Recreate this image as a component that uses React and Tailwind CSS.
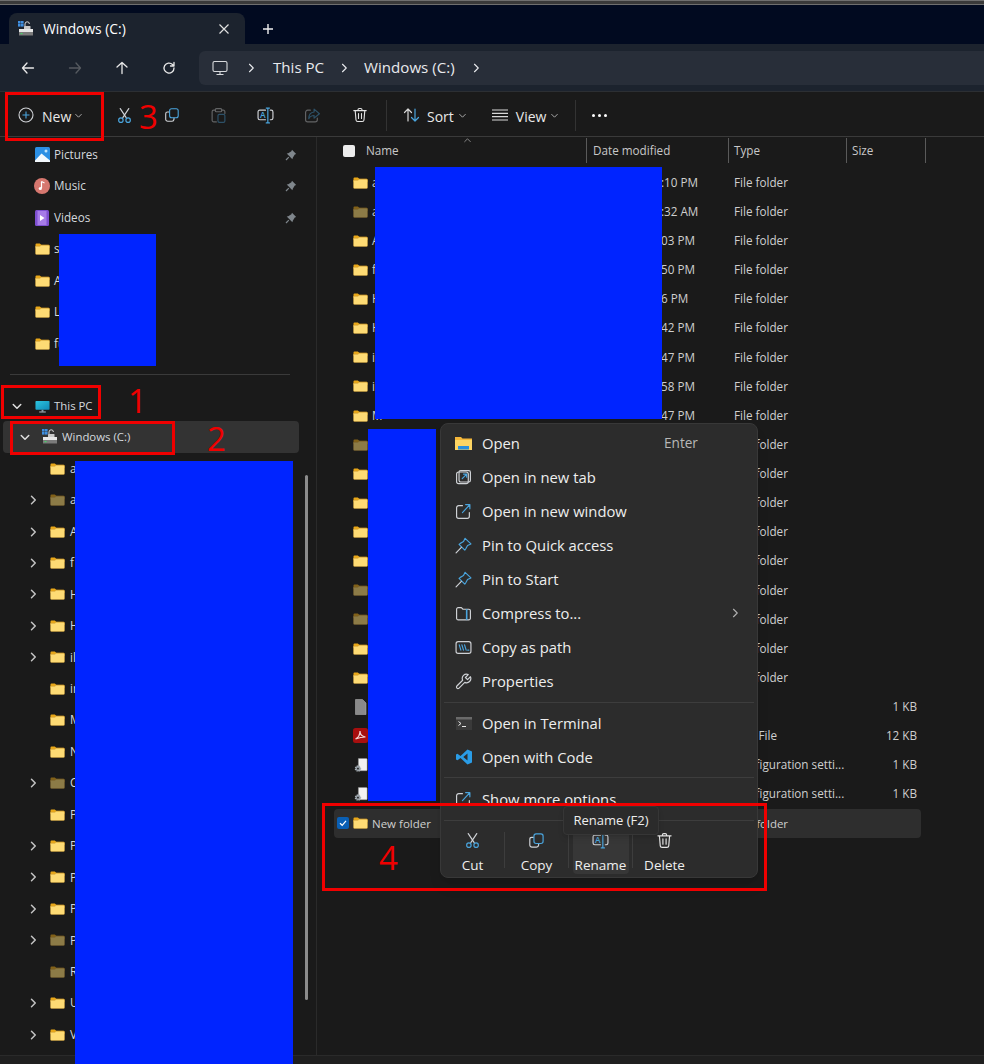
import React from 'react';

const GRAY = '#cfd2d6';
const BLUE = '#4aa5de';

// two-tone glyphs in the Windows 11 style
function Ico({ size = 18, children, className = '' }) {
  return (
    <svg width={size} height={size} viewBox="0 0 16 16" fill="none" strokeWidth="1.1" strokeLinecap="round" strokeLinejoin="round" className={`shrink-0 ${className}`}>
      {children}
    </svg>
  );
}

const Scissors = ({ size }) => (
  <Ico size={size}>
    <path d="M4 1.5 9.6 10M12 1.5 6.4 10" stroke={GRAY} />
    <circle cx="4.6" cy="12.4" r="2.1" stroke={BLUE} />
    <circle cx="11.4" cy="12.4" r="2.1" stroke={BLUE} />
  </Ico>
);
const CopyIco = ({ size }) => (
  <Ico size={size}>
    <path d="M5 5H3.5A1.8 1.8 0 0 0 1.7 6.8v5.4A2 2 0 0 0 3.7 14.2H8A2 2 0 0 0 10 12.4V11" stroke={GRAY} />
    <rect x="5.6" y="1.8" width="8.6" height="9" rx="2" stroke={BLUE} />
  </Ico>
);
const PasteIco = ({ size }) => (
  <Ico size={size}>
    <path d="M5 3H3.5A1.5 1.5 0 0 0 2 4.5v8A1.5 1.5 0 0 0 3.5 14H6M11 3h1.5A1.5 1.5 0 0 1 14 4.5V6" stroke={GRAY} />
    <rect x="5" y="1.5" width="6" height="3" rx="1" stroke={GRAY} />
    <rect x="7.5" y="7" width="6.5" height="7.5" rx="1.3" stroke={BLUE} />
  </Ico>
);
const RenameIco = ({ size }) => (
  <Ico size={size}>
    <path d="M8 3H2.6A1.6 1.6 0 0 0 1 4.6v5.8A1.6 1.6 0 0 0 2.6 12H8M12.5 3h.9A1.6 1.6 0 0 1 15 4.6v5.800a1.6 1.6 0 0 1-1.6 1.600h-.9" stroke={GRAY} />
    <path d="M10.2 1v14M8.700 1h3M8.700 15h3" stroke={BLUE} />
    <text x="2.800" y="10.300" fontSize="8" fontWeight="600" fontFamily="Open Sans, sans-serif" fill={BLUE} stroke="none">A</text>
  </Ico>
);
const ShareIco = ({ size }) => (
  <Ico size={size}>
    <path d="M6 3H3.5A2 2 0 0 0 1.5 5v7A2 2 0 0 0 3.5 14h7a2 2 0 0 0 2-2v-1.5" stroke={GRAY} />
    <path d="M9.5 2 14.5 6.3 9.5 10.5V8C7 8 5.5 9 4.5 11 4.5 7.5 6.5 5 9.5 4.7Z" stroke={BLUE} />
  </Ico>
);
const TrashIco = ({ size }) => (
  <Ico size={size}>
    <path d="M1.8 3.6h12.4M6 3.6V2.800A1.3 1.3 0 0 1 7.300 1.500h1.400A1.300 1.300 0 0 1 10 2.800v.8M3.200 3.600l.8 9.400a1.700 1.700 0 0 0 1.700 1.500h4.600A1.700 1.700 0 0 0 12 13l.8-9.400M6.500 6.500v5M9.500 6.500v5" stroke="#e4e4e4" />
  </Ico>
);
const Chevron = ({ dir = 'down', size = 12, color = '#d0d0d0', w = 1.5 }) => {
  const d = { down: 'M3 6l5 5 5-5', up: 'M3 10l5-5 5 5', right: 'M6 3l5 5-5 5' }[dir];
  return (
    <svg width={size} height={size} viewBox="0 0 16 16" fill="none" stroke={color} strokeWidth={w} strokeLinecap="round" strokeLinejoin="round" className="shrink-0">
      <path d={d} />
    </svg>
  );
};

function Folder({ dim = false, w = 15 }) {
  return (
    <svg width={w} height={w * 0.8} viewBox="0 0 15 12" className={`shrink-0 ${dim ? 'opacity-50' : ''}`}>
      <path d="M.5 1.5A1 1 0 0 1 1.5.5h3.300l1.500 1.300h7.200a1 1 0 0 1 1 1V5H.5Z" fill="#e9a718" />
      <path d="M.5 3.300h4.300l1.400-1h7.300a1 1 0 0 1 1 1v7.200a1 1 0 0 1-1 1h-12a1 1 0 0 1-1-1Z" fill="#fedb74" stroke="#c79a3a" strokeWidth=".5" />
    </svg>
  );
}

function DriveIco({ w = 16 }) {
  return (
    <svg width={w} height={w} viewBox="0 0 16 16" className="shrink-0">
      <rect x="0" y="0" width="2.6" height="2.6" fill="#3f8fe0" />
      <rect x="3" y="0" width="2.6" height="2.6" fill="#3f8fe0" />
      <rect x="0" y="3" width="2.6" height="2.6" fill="#3f8fe0" />
      <rect x="3" y="3" width="2.6" height="2.6" fill="#3f8fe0" />
      <path d="M7 5.500V3a2.200 2.200 0 0 1 4.400 0" fill="none" stroke="#d8d8d8" strokeWidth="1" />
      <rect x="6" y="5" width="6.5" height="4" rx=".6" fill="#c9c9c9" />
      <path d="M1 8h14v3H1Z" fill="#e6e6e6" />
      <rect x="1" y="11" width="14" height="3.5" fill="#7b7b7b" />
      <rect x="2.500" y="12" width="2" height="1.2" fill="#47d16a" />
    </svg>
  );
}

function PcIco({ size = 16 }) {
  return (
    <svg width={size} height={size} viewBox="0 0 16 16" className="shrink-0">
      <defs>
        <linearGradient id="pcg" x1="0" y1="0" x2="1" y2="1">
          <stop offset="0" stopColor="#2dc6e0" />
          <stop offset="1" stopColor="#0f8ab8" />
        </linearGradient>
      </defs>
      <rect x="0.5" y="2" width="15" height="9.5" rx=".8" fill="url(#pcg)" />
      <rect x="7" y="11.5" width="2" height="2" fill="#8c9aa6" />
      <rect x="4.5" y="13.3" width="7" height="1.1" fill="#aeb6bd" />
    </svg>
  );
}

function QuickIco({ kind }) {
  if (kind === 'pictures') {
    return (
      <svg width="15" height="15" viewBox="0 0 15 15" className="shrink-0">
        <rect width="15" height="15" rx="1.5" fill="#2b8fe4" />
        <circle cx="11" cy="4" r="1.5" fill="#bfe3fb" />
        <path d="M0 13.500 6.500 6.500 15 13.500V15H0Z" fill="#f2f8fd" />
      </svg>
    );
  }
  if (kind === 'music') {
    return (
      <svg width="16" height="16" viewBox="0 0 16 16" className="shrink-0">
        <circle cx="8" cy="8" r="8" fill="#d6776f" />
        <path d="M7.500 3.500v6.500" stroke="#fff" strokeWidth="1.2" />
        <path d="M7.500 3.500 10.500 5" stroke="#fff" strokeWidth="1.2" />
        <circle cx="6.3" cy="10.5" r="1.6" fill="#fff" />
      </svg>
    );
  }
  return (
    <svg width="14" height="16" viewBox="0 0 14 16" className="shrink-0">
      <rect width="14" height="16" rx="1.5" fill="#7e4fd0" />
      <rect x="2.5" y="1" width="9" height="14" fill="#a77ce8" />
      <path d="M5 5v6l4.500-3Z" fill="#fff" />
    </svg>
  );
}

const Pin = () => (
  <svg width="12" height="12" viewBox="0 0 12 12" className="shrink-0">
    <path d="M7 .8 11.200 5 9.800 5.600 7.800 8.800 7.400 10.300 1.700 4.600 3.200 4.200 6.400 2.200Z" fill="#7f868c" />
    <path d="M3.800 8.200 1 11" stroke="#7f868c" strokeWidth="1.2" />
  </svg>
);

const sideRows = [
  { icon: 'pictures', label: 'Pictures', pin: true },
  { icon: 'music', label: 'Music', pin: true },
  { icon: 'videos', label: 'Videos', pin: true },
  { label: 's' },
  { label: 'A' },
  { label: 'L' },
  { label: 'fu' },
];

const treeRows = [
  { label: 'a' },
  { label: 'a', chev: true, dim: true },
  { label: 'A', chev: true },
  { label: 'f', chev: true },
  { label: 'H', chev: true },
  { label: 'H', chev: true },
  { label: 'il', chev: true },
  { label: 'in' },
  { label: 'M' },
  { label: 'N' },
  { label: 'C', chev: true, dim: true },
  { label: 'P' },
  { label: 'P', chev: true },
  { label: 'P', chev: true },
  { label: 'P', chev: true },
  { label: 'P', chev: true, dim: true },
  { label: 'R', dim: true },
  { label: 'U', chev: true },
  { label: 'V', chev: true },
];

const files = [
  { name: 'a', date: ':10 PM' },
  { name: 'a', date: ':32 AM', dim: true },
  { name: 'A', date: '03 PM' },
  { name: 'f', date: '50 PM' },
  { name: 'H', date: '6 PM' },
  { name: 'H', date: '42 PM' },
  { name: 'i', date: '47 PM' },
  { name: 'i', date: '58 PM' },
  { name: 'M', date: '47 PM' },
  { name: 'N', dim: true, tail: 'r' },
  { name: 'C' },
  { name: 'P', tail: 'es' },
  { name: 'P', tail: 'es' },
  { name: 'P', tail: 'es' },
  { name: 'P', dim: true, tail: 'a' },
  { name: 'R', dim: true },
  { name: 'U' },
  { name: 'V' },
  { name: 'b', kind: 'file', type: '', size: '1 KB', tail: '2' },
  { name: 'b', kind: 'pdf', type: 'PDF File', size: '12 KB' },
  { name: 'c', kind: 'cfg', type: 'Configuration setti...', size: '1 KB', tail: 'r' },
  { name: 'c', kind: 'cfg', type: 'Configuration setti...', size: '1 KB', tail: 'r' },
];

function FileIcon({ kind, dim }) {
  if (kind === 'file') {
    return (
      <svg width="15" height="16" viewBox="0 0 15 16" className="shrink-0">
        <path d="M2.500 .5h7l3.500 3.500v11.500h-10.500Z" fill="#8a8a8a" stroke="#a9a9a9" strokeWidth=".6" />
      </svg>
    );
  }
  if (kind === 'pdf') {
    return (
      <svg width="15" height="15" viewBox="0 0 15 15" className="shrink-0">
        <rect width="15" height="15" rx="2.5" fill="#a80f0f" />
        <path d="M2.500 11C5.500 9.500 7 6 7 3c0 3 2 5.500 5.500 6-3 0-6 .5-10 2Z" fill="none" stroke="#f3d6d6" strokeWidth="1.2" />
      </svg>
    );
  }
  if (kind === 'cfg') {
    return (
      <svg width="14" height="15" viewBox="0 0 16 17" className="shrink-0">
        <path d="M5 .5h9a1 1 0 0 1 1 1v12a1 1 0 0 1-1 1H5Z" fill="#f2f2f2" stroke="#8f8f8f" strokeWidth=".5" />
        <circle cx="4.500" cy="12" r="2.800" fill="#8f989f" stroke="#a9b1b7" strokeWidth="1.800" strokeDasharray="1.300 1" />
        <circle cx="4.500" cy="12" r="1" fill="#1a1a1a" />
      </svg>
    );
  }
  return <Folder dim={dim} />;
}

function FileRow({ f }) {
  return (
    <div className="h-[29.14px] flex items-center text-[11.7px] text-[#cfcfcf]">
      <div className="w-[269px] flex items-center pl-[36px] gap-[4px]">
        <span className="w-[15px] flex justify-center shrink-0"><FileIcon kind={f.kind} dim={f.dim} /></span>
        <span className="w-[64px]">{f.name}</span>
        <span>{f.tail}</span>
      </div>
      <div className="w-[142px] pl-[75px] whitespace-nowrap">{f.date}</div>
      <div className="w-[118px] pl-[6px] whitespace-nowrap">{f.type ?? 'File folder'}</div>
      <div className="w-[71px] text-right whitespace-nowrap">{f.size}</div>
    </div>
  );
}

function ColHead({ w, pl, children }) {
  return (
    <div className={`${w} ${pl} mt-px h-[25px] flex items-center border-r border-[#5a5a5a] text-[11.7px] text-[#c8c8c8]`}>{children}</div>
  );
}

function MenuItem({ icon, label, shortcut, arrow }) {
  return (
    <div className="h-[34px] flex items-center pl-[14px] text-[14.8px] text-[#eeeeee]">
      <span className="w-[17px] flex justify-center shrink-0">{icon}</span>
      <span className="ml-[10px] w-[182px] whitespace-nowrap">{label}</span>
      {shortcut && <span className="text-[13.6px] text-[#b8b8b8] whitespace-nowrap">{shortcut}</span>}
      {arrow && <span className="ml-[65px]"><Chevron dir="right" size={12} color="#b0b0b0" /></span>}
    </div>
  );
}

function BarBtn({ label, icon, hover }) {
  return (
    <div className="w-[63px] flex justify-center shrink-0">
      <div className={`w-[56px] h-[47px] flex flex-col items-center pt-[5px] gap-[8px] rounded ${hover ? 'bg-[#373737]' : ''}`}>
        {icon}
        <span className="text-[13.5px] leading-[16px] text-[#eeeeee]">{label}</span>
      </div>
    </div>
  );
}

const NavArrow = ({ d, color = '#e8e8e8' }) => (
  <span className="w-[47px] flex justify-center">
    <svg width="16" height="16" viewBox="0 0 16 16" fill="none" stroke={color} strokeWidth="1.3" strokeLinecap="round" strokeLinejoin="round">
      <path d={d} />
    </svg>
  </span>
);

export default function App() {
  return (
    <div className="relative w-[984px] h-[1064px] overflow-hidden bg-[#1a1a1a] font-['Open_Sans',sans-serif]">
      {/* window edge */}
      <div className="h-[5px] bg-[#3a3a3a] border-y border-[#6f6f6f]" />

      {/* TAB STRIP */}
      <div className="h-[39px] bg-[#010a20] flex items-end pl-[9px]">
        <div className="w-[236px] h-[31px] bg-[#1c232e] rounded-t-lg flex items-center pl-[9px]">
          <DriveIco w={16} />
          <span className="ml-[9px] mt-[2px] text-[13.8px] text-white font-medium">Windows (C:)</span>
          <span className="ml-auto mr-[15px]">
            <svg width="12" height="12" viewBox="0 0 12 12" stroke="#e0e0e0" strokeWidth="1.2"><path d="M1.500 1.500l9 9M10.500 1.500l-9 9" /></svg>
          </span>
        </div>
        <div className="h-[31px] flex items-center ml-[17px]">
          <svg width="12" height="12" viewBox="0 0 12 12" stroke="#f0f0f0" strokeWidth="1.4"><path d="M6 1v10M1 6h10" /></svg>
        </div>
      </div>

      {/* NAV ROW */}
      <div className="h-[48px] bg-[#1c232e] flex items-center pl-[4px] border-b border-[#2c2f33]">
        <NavArrow d="M13.500 8h-11M7 3 2.500 8 7 13" />
        <NavArrow d="M2.500 8h11M9 3l4.500 5L9 13" color="#565a60" />
        <NavArrow d="M8 13.500v-11M3 7l5-4.500L13 7" />
        <NavArrow d="M13 8a5 5 0 1 1-1.500-3.500L13 6M13 2.500V6H9.500" />
        <div className="ml-[7px] flex-1 h-[34px] bg-[#282e39] rounded-l-md flex items-center pl-[13px] text-[15.1px] text-[#e8eaed]">
          <svg width="16" height="16" viewBox="0 0 16 16" fill="none" stroke="#d8dadd" strokeWidth="1.1">
            <rect x="1" y="1.5" width="14" height="10" rx="1.5" />
            <path d="M8 11.500v3M4.500 14.500h7" />
          </svg>
          <span className="ml-[17px]"><Chevron dir="right" size={12} color="#e8eaed" /></span>
          <span className="ml-[16px]">This PC</span>
          <span className="ml-[14px]"><Chevron dir="right" size={12} color="#e8eaed" /></span>
          <span className="ml-[14px]">Windows (C:)</span>
          <span className="ml-[15px]"><Chevron dir="right" size={12} color="#e8eaed" /></span>
        </div>
      </div>

      {/* TOOLBAR */}
      <div className="h-[45px] pt-[2px] bg-[#1a1a1a] border-b border-[#3a3a3a] flex items-center text-[#e8e8e8]">
        <div className="w-[101px] flex items-center pl-[18px]">
          <svg width="16" height="16" viewBox="0 0 16 16" fill="none" strokeWidth="1.1">
            <circle cx="8" cy="8" r="7" stroke="#cfd2d6" />
            <path d="M8 4.500v7M4.500 8h7" stroke={BLUE} />
          </svg>
          <span className="ml-[8px] mt-[3px] text-[14px]">New</span>
          <span className="ml-[3px]"><Chevron size={9} color="#c0c0c0" /></span>
        </div>
        <span className="w-[47px] flex justify-center"><Scissors size={17} /></span>
        <span className="w-[47px] flex justify-center"><CopyIco size={16} /></span>
        <span className="w-[47px] flex justify-center opacity-40"><PasteIco size={17} /></span>
        <span className="w-[47px] flex justify-center"><RenameIco size={17} /></span>
        <span className="w-[47px] flex justify-center opacity-40"><ShareIco size={17} /></span>
        <span className="w-[47px] flex justify-center"><TrashIco size={16} /></span>
        <span className="ml-[3px] w-px h-[31px] bg-[#333333]" />
        <span className="ml-[16px]">
          <svg width="17" height="16" viewBox="0 0 17 16" fill="none" strokeWidth="1.2" strokeLinecap="round" strokeLinejoin="round">
            <path d="M5 14V2M1.500 5.500 5 2l3.500 3.500" stroke="#d8d8d8" />
            <path d="M12 2v12M8.500 10.500 12 14l3.500-3.500" stroke={BLUE} />
          </svg>
        </span>
        <span className="ml-[7px] mt-[3px] text-[14px]">Sort</span>
        <span className="ml-[4px]"><Chevron size={9} color="#c0c0c0" /></span>
        <span className="ml-[25px]">
          <svg width="16" height="12" viewBox="0 0 16 12" stroke="#d8d8d8" strokeWidth="1.2"><path d="M0 1h16M0 4.300h16M0 7.600h16M0 11h16" /></svg>
        </span>
        <span className="ml-[8px] mt-[3px] text-[14px]">View</span>
        <span className="ml-[4px]"><Chevron size={9} color="#c0c0c0" /></span>
        <span className="ml-[16px] w-px h-[31px] bg-[#333333]" />
        <span className="ml-[16px] flex gap-[3px]">
          <i className="w-[3px] h-[3px] rounded-full bg-white" />
          <i className="w-[3px] h-[3px] rounded-full bg-white" />
          <i className="w-[3px] h-[3px] rounded-full bg-white" />
        </span>
      </div>

      <div className="flex h-[918px]">
        {/* SIDEBAR */}
        <aside className="relative w-[317px] pt-[2px] border-r border-[#2a2a2a] shrink-0 overflow-hidden">
          {sideRows.map((r, i) => (
            <div key={i} className="h-[31.5px] flex items-center pl-[34px] gap-[4px] text-[11.7px] text-[#d4d9de]">
              <span className="w-[16px] flex justify-center shrink-0">{r.icon ? <QuickIco kind={r.icon} /> : <Folder />}</span>
              <span>{r.label}</span>
              {r.pin && <span className="absolute left-[285px]"><Pin /></span>}
            </div>
          ))}
          <div className="h-[31.5px] flex items-center pl-[10px] pr-[26px] pb-[1px]">
            <div className="w-full h-px bg-[#3a3a3a]" />
          </div>
          <div className="h-[30px] flex items-center pl-[11px] text-[11.4px] text-[#d4d9de]">
            <Chevron size={12} color="#e0e0e0" w={2} />
            <span className="ml-[12px]"><PcIco size={15} /></span>
            <span className="ml-[4px]">This PC</span>
          </div>
          <div className="h-[32px] ml-[3px] w-[296px] bg-[#333333] rounded flex items-center pl-[16px] text-[11.4px] text-[#d4d9de]">
            <Chevron size={12} color="#e0e0e0" w={2} />
            <span className="ml-[11px]"><DriveIco w={16} /></span>
            <span className="ml-[4px]">Windows (C:)</span>
          </div>
          {treeRows.map((r, i) => (
            <div key={i} className="h-[31.45px] flex items-center pl-[27px] text-[11.7px] text-[#d4d9de]">
              <span className="w-[12px] shrink-0">{r.chev && <Chevron dir="right" size={12} color="#c4c4c4" w={2} />}</span>
              <span className="ml-[11px]"><Folder dim={r.dim} /></span>
              <span className="ml-[5px]">{r.label}</span>
            </div>
          ))}
          {/* sidebar scrollbar */}
          <div className="absolute left-[305px] top-[338px] w-[3px] h-[525px] rounded-full bg-[#8c8c8c]" />
        </aside>

        {/* FILE LIST */}
        <main className="flex-1 min-w-0">
          <div className="h-[31px] flex items-start">
            <div className="w-[270px] mt-px h-[25px] pl-[26px] flex items-center border-r border-[#5a5a5a] text-[11.7px] text-[#c8c8c8]">
              <span className="w-[12px] h-[12px] rounded-[2px] bg-[#ececec]" />
              <span className="ml-[11px]">Name</span>
              <span className="ml-[64px] -mt-[20px]"><Chevron dir="up" size={9} color="#9a9a9a" /></span>
            </div>
            <ColHead w="w-[142px]" pl="pl-[6px]">Date modified</ColHead>
            <ColHead w="w-[118px]" pl="pl-[5px]">Type</ColHead>
            <ColHead w="w-[79px]" pl="pl-[5px]">Size</ColHead>
          </div>
          {files.map((f, i) => <FileRow key={i} f={f} />)}
          <div className="h-[29px] ml-[17px] w-[587px] bg-[#2e2e2e] rounded flex items-center pl-[3px] text-[11.5px] text-[#cfcfcf]">
            <span className="w-[12px] h-[12px] rounded-[2px] bg-[#0a5fb4] flex items-center justify-center">
              <svg width="8" height="8" viewBox="0 0 8 8" fill="none" stroke="#fff" strokeWidth="1.2"><path d="M1 4.200 3.200 6.300 7 1.800" /></svg>
            </span>
            <span className="ml-[4px]"><Folder /></span>
            <span className="ml-[4px] w-[363px]">New folder</span>
            <span>File folder</span>
          </div>
        </main>
      </div>

      {/* STATUS BAR */}
      <div className="h-[9px] bg-[#1f1f1f] border-t border-[#2a2a2a] pl-[14px] pt-[5px] text-[11px] leading-[14px] text-[#9a9a9a] overflow-hidden">22 items</div>

      {/* REDACTIONS */}
      <div className="absolute left-[59px] top-[234px] w-[97px] h-[132px] bg-[#0024ff]" />
      <div className="absolute left-[75px] top-[461px] w-[218px] h-[603px] bg-[#0024ff]" />
      <div className="absolute left-[375px] top-[167px] w-[287px] h-[252px] bg-[#0024ff]" />
      <div className="absolute left-[368px] top-[429px] w-[68px] h-[372px] bg-[#0024ff]" />

      {/* CONTEXT MENU */}
      <div className="absolute left-[440px] top-[423px] w-[318px] h-[455px] bg-[#2c2c2c] border border-[#383838] rounded-lg shadow-lg pt-[2px]">
        <MenuItem label="Open" shortcut="Enter" icon={
          <svg width="17" height="15" viewBox="0 0 17 15"><path d="M0 1h6l1.500 1.500H17V14H0Z" fill="#f4b73a" /><rect x="0" y="4" width="17" height="10" fill="#fdd563" /><rect x="3" y="10" width="11" height="3.5" fill="#2a8fdc" /></svg>
        } />
        <MenuItem label="Open in new tab" icon={
          <Ico size={17}><rect x="1.5" y="2.8" width="11" height="11" rx="2" stroke={GRAY} /><rect x="3.8" y="1.5" width="10.7" height="10.7" rx="1.5" stroke={GRAY} /><path d="M6.800 9 11 4.800M8 4.800h3v3" stroke={BLUE} /></Ico>
        } />
        <MenuItem label="Open in new window" icon={
          <Ico size={17}><path d="M7 2.500H3.500a2 2 0 0 0-2 2v8a2 2 0 0 0 2 2h8a2 2 0 0 0 2-2V9" stroke={GRAY} /><path d="M7 9l7-7.500M10 1.500h4V5.500" stroke={BLUE} /></Ico>
        } />
        <MenuItem label="Pin to Quick access" icon={
          <Ico size={17}><path d="M9.500 1.300 15 6.500 11.800 8 10 11.300 9.200 12.300 3.800 7 5 6 8 4.300Z" stroke={BLUE} /><path d="M6 9.800 1 15" stroke={GRAY} /></Ico>
        } />
        <MenuItem label="Pin to Start" icon={
          <Ico size={17}><path d="M9.500 1.300 15 6.500 11.800 8 10 11.300 9.200 12.300 3.800 7 5 6 8 4.300Z" stroke={BLUE} /><path d="M6 9.800 1 15" stroke={GRAY} /></Ico>
        } />
        <MenuItem label="Compress to..." arrow icon={
          <Ico size={17}><path d="M1.500 4A1.500 1.500 0 0 1 3 2.500h3L7.500 4h5.500A1.500 1.500 0 0 1 14.500 5.500v7A1.500 1.500 0 0 1 13 14H3a1.500 1.500 0 0 1-1.500-1.500Z" stroke={GRAY} /><path d="M11 4.500v9" stroke={BLUE} strokeWidth="1.5" /></Ico>
        } />
        <MenuItem label="Copy as path" icon={
          <Ico size={17}><rect x="1" y="2.5" width="14" height="11" rx="2" stroke={GRAY} /><path d="M4 5.500 5.500 10.500M6.500 5.500 8 10.500M9 5.500l1.500 5M12 10.500h1" stroke={BLUE} /></Ico>
        } />
        <MenuItem label="Properties" icon={
          <Ico size={17}><path d="M14.500 3.500 11.800 6.200 9.800 4.200 12.500 1.500A4 4 0 0 0 7.200 6.800L1.800 12.200a1.400 1.400 0 0 0 2 2L9.200 8.800a4 4 0 0 0 5.300-5.300Z" stroke={GRAY} /></Ico>
        } />
        <div className="h-px bg-[#3d3d3d] mx-[3px] mt-[4px] mb-[3px]" />
        <MenuItem label="Open in Terminal" icon={
          <svg width="16" height="13" viewBox="0 0 16 13"><rect width="16" height="13" fill="#3a3a3a" /><rect width="16" height="2.5" fill="#6a6a6a" /><path d="M2.500 4.500 5 6.500 2.500 8.500" fill="none" stroke="#e8e8e8" strokeWidth="1" /><path d="M6 9.500h4" stroke="#e8e8e8" strokeWidth="1" /></svg>
        } />
        <MenuItem label="Open with Code" icon={
          <svg width="16" height="16" viewBox="0 0 16 16"><path d="M11.500.5 16 2.500v11L11.500 15.500 4.500 9 1.500 11.300 0 10.500V5.500l1.500-.8L4.500 7ZM11.500 4.500 7.300 8l4.200 3.500Z" fill="#2a9ce6" /></svg>
        } />
        <div className="h-px bg-[#3d3d3d] mx-[3px] mt-[3px] mb-[4px]" />
        <div className="h-[22px] mb-[16px] overflow-hidden">
          <div className="h-[34px] flex items-center pl-[14px] text-[14.8px] text-[#eeeeee]">
            <span className="w-[17px] flex justify-center shrink-0">
              <Ico size={17}><path d="M7 2.500H3.500a2 2 0 0 0-2 2v8a2 2 0 0 0 2 2h8a2 2 0 0 0 2-2V9" stroke={GRAY} /><path d="M7 9l7-7.500M10 1.500h4V5.500" stroke={BLUE} /></Ico>
            </span>
            <span className="ml-[10px] whitespace-nowrap">Show more options</span>
          </div>
        </div>
        <div className="h-px bg-[#3d3d3d] mx-[3px] mb-[2px]" />
        <div className="flex items-center h-[54px]">
          <BarBtn label="Cut" icon={<Scissors size={17} />} />
          <span className="w-px h-[36px] bg-[#3d3d3d]" />
          <BarBtn label="Copy" icon={<CopyIco size={17} />} />
          <span className="w-px h-[36px] bg-[#3d3d3d]" />
          <BarBtn label="Rename" hover icon={<RenameIco size={17} />} />
          <span className="w-px h-[36px] bg-[#3d3d3d]" />
          <BarBtn label="Delete" icon={<TrashIco size={17} />} />
        </div>
      </div>

      {/* TOOLTIP */}
      <div className="absolute left-[563px] top-[806px] w-[96px] h-[29px] bg-[#2b2b2b] border border-[#363636] rounded flex items-center justify-center text-[13px] text-[#eeeeee] whitespace-nowrap shadow-md">
        Rename (F2)
      </div>

      {/* ANNOTATIONS */}
      <div className="absolute left-[5px] top-[92px] w-[99px] h-[49px] border-[3px] border-[#f00000]" />
      <div className="absolute left-[1px] top-[385px] w-[100px] h-[34px] border-[3px] border-[#f00000]" />
      <div className="absolute left-[10px] top-[421px] w-[165px] h-[34px] border-[3px] border-[#f00000]" />
      <div className="absolute left-[322px] top-[803px] w-[445px] h-[88px] border-[3px] border-[#f00000]" />
      <span className="absolute left-[139px] top-[94px] text-[33px] leading-[45px] text-[#f00000]">3</span>
      <span className="absolute left-[128px] top-[378px] text-[33px] leading-[45px] text-[#f00000]">1</span>
      <span className="absolute left-[207px] top-[416px] text-[33px] leading-[45px] text-[#f00000]">2</span>
      <span className="absolute left-[379px] top-[835px] text-[33px] leading-[45px] text-[#f00000]">4</span>
    </div>
  );
}
